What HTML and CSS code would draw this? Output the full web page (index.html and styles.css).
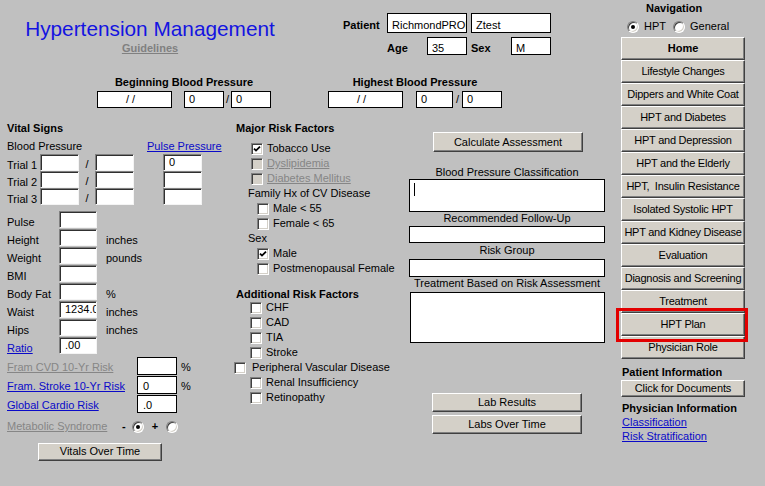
FILE: index.html
```html
<!DOCTYPE html>
<html>
<head>
<meta charset="utf-8">
<title>Hypertension Management</title>
<link rel="stylesheet" href="styles.css">
</head>
<body>
<div class="form">
  <div class="main">
    <header class="head">
      <div class="head-top">
        <div class="brand">
          <h1 class="title">Hypertension Management</h1>
          <div class="guide">Guidelines</div>
        </div>
        <div class="patient">
          <div class="prow">
            <div class="plabel">Patient</div>
            <div class="box pname">RichmondPROD</div>
            <div class="box pname gap4">Ztest</div>
          </div>
          <div class="prow prow2">
            <div class="alabel">Age</div>
            <div class="box asmall">35</div>
            <div class="alabel gap4">Sex</div>
            <div class="box asmall">M</div>
          </div>
        </div>
      </div>
      <div class="bprow">
        <div class="bpgroup bpg1">
          <div class="bold">Beginning Blood Pressure</div>
          <div class="bpinputs">
            <div class="box bpdate">/ /</div>
            <div class="box bpnum sp12">0</div>
            <div class="slash">/</div>
            <div class="box bpnum">0</div>
          </div>
        </div>
        <div class="bpgroup bpg2">
          <div class="bold">Highest Blood Pressure</div>
          <div class="bpinputs">
            <div class="box bpdate">/ /</div>
            <div class="box bpnum n37 sp13">0</div>
            <div class="slash s9">/</div>
            <div class="box bpnum">0</div>
          </div>
        </div>
      </div>
    </header>

    <div class="cols">
      <section class="vitals">
        <div class="bold sec-title">Vital Signs</div>
        <div class="bphead">
          <span class="bphead-label">Blood Pressure</span>
          <a class="link">Pulse Pressure</a>
        </div>
        <div class="trials">
          <div class="trow">
            <div class="tlabel">Trial 1</div>
            <div class="sunk w39"></div>
            <div class="tslash">/</div>
            <div class="sunk w39"></div>
            <div class="sunk w39 sp29">0</div>
          </div>
          <div class="trow">
            <div class="tlabel">Trial 2</div>
            <div class="sunk w39"></div>
            <div class="tslash">/</div>
            <div class="sunk w39"></div>
            <div class="sunk w39 sp29"></div>
          </div>
          <div class="trow">
            <div class="tlabel">Trial 3</div>
            <div class="sunk w39"></div>
            <div class="tslash">/</div>
            <div class="sunk w39"></div>
            <div class="sunk w39 sp29"></div>
          </div>
        </div>
        <div class="vrows">
          <div class="vrow"><div class="vlabel">Pulse</div><div class="sunk w38"></div></div>
          <div class="vrow"><div class="vlabel">Height</div><div class="sunk w38"></div><div class="unit">inches</div></div>
          <div class="vrow"><div class="vlabel">Weight</div><div class="sunk w38"></div><div class="unit">pounds</div></div>
          <div class="vrow"><div class="vlabel">BMI</div><div class="sunk w38"></div></div>
          <div class="vrow"><div class="vlabel">Body Fat</div><div class="sunk w38"></div><div class="unit">%</div></div>
          <div class="vrow"><div class="vlabel">Waist</div><div class="sunk w38">1234.00</div><div class="unit">inches</div></div>
          <div class="vrow"><div class="vlabel">Hips</div><div class="sunk w38"></div><div class="unit">inches</div></div>
          <div class="vrow"><div class="vlabel"><a class="link">Ratio</a></div><div class="sunk w38">.00</div></div>
        </div>
        <div class="frows">
          <div class="frow"><div class="flabel"><span class="dis">Fram CVD 10-Yr Risk</span></div><div class="box fbox"></div><div class="funit">%</div></div>
          <div class="frow"><div class="flabel"><a class="link">Fram. Stroke 10-Yr Risk</a></div><div class="box fbox">0</div><div class="funit">%</div></div>
          <div class="frow"><div class="flabel"><a class="link">Global Cardio Risk</a></div><div class="box fbox">.0</div></div>
        </div>
        <div class="mrow">
          <div class="mlabel"><span class="dis">Metabolic Syndrome</span></div>
          <div class="msign">-</div>
          <div class="radio on"></div>
          <div class="msign plus">+</div>
          <div class="radio"></div>
        </div>
        <div class="btn vbtn">Vitals Over Time</div>
      </section>

      <section class="risk">
        <div class="bold sec-title rtitle">Major Risk Factors</div>
        <div class="cbrows">
          <div class="cbrow l1"><span class="cb"><svg viewBox="0 0 8 8" width="8" height="8"><polyline points="1,3.6 3,5.6 7,1.6" fill="none" stroke="#000" stroke-width="1.8"/></svg></span><span class="cbt">Tobacco Use</span></div>
          <div class="cbrow l1"><span class="cb off"></span><span class="cbt dis">Dyslipidemia</span></div>
          <div class="cbrow l1"><span class="cb off"></span><span class="cbt dis">Diabetes Mellitus</span></div>
          <div class="cbrow sub">Family Hx of CV Disease</div>
          <div class="cbrow l2"><span class="cb"></span><span class="cbt">Male &lt; 55</span></div>
          <div class="cbrow l2"><span class="cb"></span><span class="cbt">Female &lt; 65</span></div>
          <div class="cbrow sub">Sex</div>
          <div class="cbrow l2"><span class="cb"><svg viewBox="0 0 8 8" width="8" height="8"><polyline points="1,3.6 3,5.6 7,1.6" fill="none" stroke="#000" stroke-width="1.8"/></svg></span><span class="cbt">Male</span></div>
          <div class="cbrow l2"><span class="cb"></span><span class="cbt">Postmenopausal Female</span></div>
        </div>
        <div class="bold sec-title atitle">Additional Risk Factors</div>
        <div class="cbrows2">
          <div class="cbrow a1"><span class="cb"></span><span class="cbt">CHF</span></div>
          <div class="cbrow a1"><span class="cb"></span><span class="cbt">CAD</span></div>
          <div class="cbrow a1"><span class="cb"></span><span class="cbt">TIA</span></div>
          <div class="cbrow a1"><span class="cb"></span><span class="cbt">Stroke</span></div>
          <div class="cbrow a0"><span class="cb"></span><span class="cbt">Peripheral Vascular Disease</span></div>
          <div class="cbrow a1"><span class="cb"></span><span class="cbt">Renal Insufficiency</span></div>
          <div class="cbrow a1"><span class="cb"></span><span class="cbt">Retinopathy</span></div>
        </div>
      </section>

      <section class="assess">
        <div class="btn calc">Calculate Assessment</div>
        <div class="clabel first">Blood Pressure Classification</div>
        <div class="box rbox r33"><span class="caret"></span></div>
        <div class="clabel">Recommended Follow-Up</div>
        <div class="box rbox r17"></div>
        <div class="clabel">Risk Group</div>
        <div class="box rbox r18"></div>
        <div class="clabel">Treatment Based on Risk Assessment</div>
        <div class="box rbox r51"></div>
        <div class="btn labbtn lab1">Lab Results</div>
        <div class="btn labbtn lab2">Labs Over Time</div>
      </section>
    </div>
  </div>

  <nav class="nav">
    <div class="bold nav-title">Navigation</div>
    <div class="nav-radios">
      <div class="radio on"></div><span class="rtext">HPT</span>
      <div class="radio r2"></div><span class="rtext">General</span>
    </div>
    <div class="navbtns">
      <div class="btn nbtn bold">Home</div>
      <div class="btn nbtn">Lifestyle Changes</div>
      <div class="btn nbtn">Dippers and White Coat</div>
      <div class="btn nbtn">HPT and Diabetes</div>
      <div class="btn nbtn">HPT and Depression</div>
      <div class="btn nbtn">HPT and the Elderly</div>
      <div class="btn nbtn">HPT,&nbsp; Insulin Resistance</div>
      <div class="btn nbtn">Isolated Systolic HPT</div>
      <div class="btn nbtn">HPT and Kidney Disease</div>
      <div class="btn nbtn">Evaluation</div>
      <div class="btn nbtn">Diagnosis and Screening</div>
      <div class="btn nbtn">Treatment</div>
      <div class="btn nbtn hl">HPT Plan</div>
      <div class="btn nbtn">Physician Role</div>
    </div>
    <div class="bold nav-sec pi">Patient Information</div>
    <div class="btn docbtn">Click for Documents</div>
    <div class="bold nav-sec phy">Physician Information</div>
    <a class="link nlink">Classification</a>
    <a class="link nlink">Risk Stratification</a>
  </nav>
</div>
</body>
</html>
```

FILE: styles.css
```css
* { box-sizing: border-box; }
html, body { margin: 0; padding: 0; }
body {
  width: 765px;
  height: 486px;
  overflow: hidden;
  background: #c0c0c0;
  font-family: "Liberation Sans", Arial, sans-serif;
  font-size: 11px;
  line-height: 13px;
  color: #000;
}
.bold { font-weight: bold; }
.link { color: #0a0ac8; text-decoration: underline; cursor: pointer; }
.dis { color: #868686; text-decoration: underline; }

.form { display: flex; height: 486px; }
.main { width: 612px; }
.nav { width: 153px; display: flex; flex-direction: column; }

/* header */
.head { height: 118px; }
.head-top { display: flex; }
.brand { width: 250px; margin-left: 25px; padding-top: 17px; text-align: center; }
.title {
  margin: 0;
  font-size: 20.8px;
  line-height: 24px;
  font-weight: normal;
  color: #1414e0;
  white-space: nowrap;
}
.guide { margin-top: 1px; font-weight: bold; color: #808080; text-decoration: underline; }
.patient { margin-left: 68px; padding-top: 13px; }
.prow { display: flex; align-items: flex-start; }
.plabel { width: 44px; font-weight: bold; padding-top: 6px; }
.box {
  background: #fff;
  border: 1px solid #000;
  padding: 0 4px;
  white-space: nowrap;
  overflow: hidden;
}
.pname { width: 80px; height: 20px; padding-top: 5px; }
.gap4 { margin-left: 4px; }
.prow2 { margin-top: 4px; margin-left: 44px; }
.alabel { width: 40px; font-weight: bold; padding-top: 5px; }
.asmall { width: 40px; height: 18px; padding-top: 4px; }

.bprow { display: flex; margin-top: 21px; }
.bpgroup { display: flex; flex-direction: column; align-items: center; width: 174px; }
.bpg1 { margin-left: 97px; }
.bpg2 { margin-left: 57px; }
.bpinputs { display: flex; margin-top: 2px; }
.bpdate { width: 75px; height: 17px; text-align: center; padding: 1px 8px 0 0; }
.bpnum { width: 40px; height: 17px; padding-top: 1px; }
.n37 { width: 37px; }
.sp12 { margin-left: 12px; }
.sp13 { margin-left: 13px; }
.slash { width: 7px; text-align: center; line-height: 17px; }
.s9 { width: 9px; }

/* columns */
.cols { display: flex; }
.vitals { width: 230px; padding-left: 7px; }
.risk { width: 175px; }
.assess { width: 207px; }
.sec-title { margin-top: 4px; }

/* vitals */
.bphead { display: flex; margin-top: 5px; }
.bphead-label { width: 140px; }
.trials { margin-top: 1px; }
.trow { display: flex; height: 17px; }
.tlabel { width: 33px; padding-top: 5px; }
.tslash { width: 16px; text-align: center; padding-top: 4px; }
.sunk {
  height: 17px;
  background: #fff;
  border: 1px solid;
  border-color: #808080 #f4f4f4 #f4f4f4 #808080;
  box-shadow: inset 1px 1px #303030;
  padding: 1px 0 0 5px;
  white-space: nowrap;
  overflow: hidden;
}
.w39 { width: 39px; }
.w38 { width: 38px; }
.sp29 { margin-left: 29px; }
.vrows { margin-top: 6px; }
.vrow { display: flex; height: 18px; }
.vlabel { width: 52px; padding-top: 5px; }
.unit { margin-left: 9px; padding-top: 5px; }
.frows { margin-top: 2px; }
.frow { display: flex; height: 19px; }
.flabel { width: 130px; padding-top: 4px; white-space: nowrap; }
.fbox { width: 40px; height: 18px; padding: 3px 0 0 5px; }
.funit { margin-left: 4px; padding-top: 4px; }
.mrow { display: flex; align-items: center; height: 13px; margin-top: 6px; }
.mlabel { width: 115px; white-space: nowrap; }
.msign { width: 10px; text-align: left; font-weight: bold; }
.msign.plus { width: 22px; text-align: center; }

.radio {
  position: relative;
  width: 12px;
  height: 12px;
  border-radius: 50%;
  background: #fff;
  border: 1px solid;
  border-color: #808080 #ffffff #ffffff #808080;
  box-shadow: inset 1px 1px #404040, inset -1px -1px #d4d0c8;
  flex: none;
}
.radio.on::after {
  content: "";
  position: absolute;
  left: 3px;
  top: 3px;
  width: 4px;
  height: 4px;
  border-radius: 50%;
  background: #000;
}

.btn {
  background: #d4d0c8;
  border: 1px solid;
  border-color: #ffffff #404040 #404040 #ffffff;
  box-shadow: inset -1px -1px #808080;
  text-align: center;
  white-space: nowrap;
}
.vbtn { width: 124px; height: 18px; line-height: 14px; margin: 10px 0 0 31px; }

/* risk */
.rtitle { padding-left: 6px; }
.cbrows { margin-top: 6px; }
.cbrow { display: flex; align-items: center; height: 15px; line-height: 15px; white-space: nowrap; }
.cb {
  width: 12px;
  height: 12px;
  flex: none;
  display: flex;
  align-items: center;
  justify-content: center;
  background: #fff;
  border: 1px solid;
  border-color: #808080 #ffffff #ffffff #808080;
  box-shadow: inset 1px 1px #404040, inset -1px -1px #d4d0c8;
}
.cb.off { background: #d4d0c8; }
.cbt { margin-left: 4px; }
.l1 { padding-left: 21px; }
.l2 { padding-left: 27px; }
.sub { padding-left: 18px; }
.atitle { margin-top: 12px; padding-left: 6px; line-height: 12px; }
.a1 { padding-left: 20px; }
.a0 { padding-left: 4px; }
.a0 .cbt { margin-left: 6px; }

/* assessment */
.calc { width: 150px; height: 20px; line-height: 18px; margin: 14px 0 0 28px; }
.clabel { width: 196px; margin-left: 4px; text-align: center; white-space: nowrap; }
.clabel.first { margin-top: 14px; }
.rbox { width: 196px; margin-left: 4px; padding: 0; }
.r33 { height: 33px; }
.r17 { height: 17px; margin-top: 1px; }
.r18 { height: 18px; margin-top: 2px; }
.r51 { height: 51px; margin-top: 2px; margin-left: 5px; width: 195px; }
.r17 + .clabel { margin-top: 1px; }
.caret { display: block; width: 1px; height: 13px; background: #000; margin: 3px 0 0 4px; }
.labbtn { width: 150px; height: 19px; line-height: 17px; margin-left: 27px; }
.lab1 { margin-top: 50px; }
.lab2 { margin-top: 3px; }

/* nav */
.nav-title { margin-top: 2px; padding-left: 34px; }
.nav-radios { display: flex; align-items: center; height: 17px; margin-top: 3px; padding-left: 15px; }
.rtext { margin-left: 5px; }
.r2 { margin-left: 7px; }
.navbtns { margin: 2px 0 0 9px; width: 124px; }
.nbtn { height: 23px; line-height: 21px; letter-spacing: -0.25px; overflow: hidden; }
.nbtn.bold { letter-spacing: 0; }
.hl { position: relative; z-index: 1; overflow: visible; }
.hl::after {
  content: "";
  position: absolute;
  left: -6px;
  top: -6px;
  right: -4px;
  bottom: -7px;
  border: 3px solid #e30000;
}
.nav-sec { padding-left: 10px; }
.pi { margin-top: 7px; }
.docbtn { width: 124px; height: 17px; line-height: 15px; margin: 1px 0 0 9px; letter-spacing: -0.1px; }
.phy { margin-top: 5px; }
.nlink { display: block; padding-left: 10px; line-height: 14px; align-self: flex-start; }
```
